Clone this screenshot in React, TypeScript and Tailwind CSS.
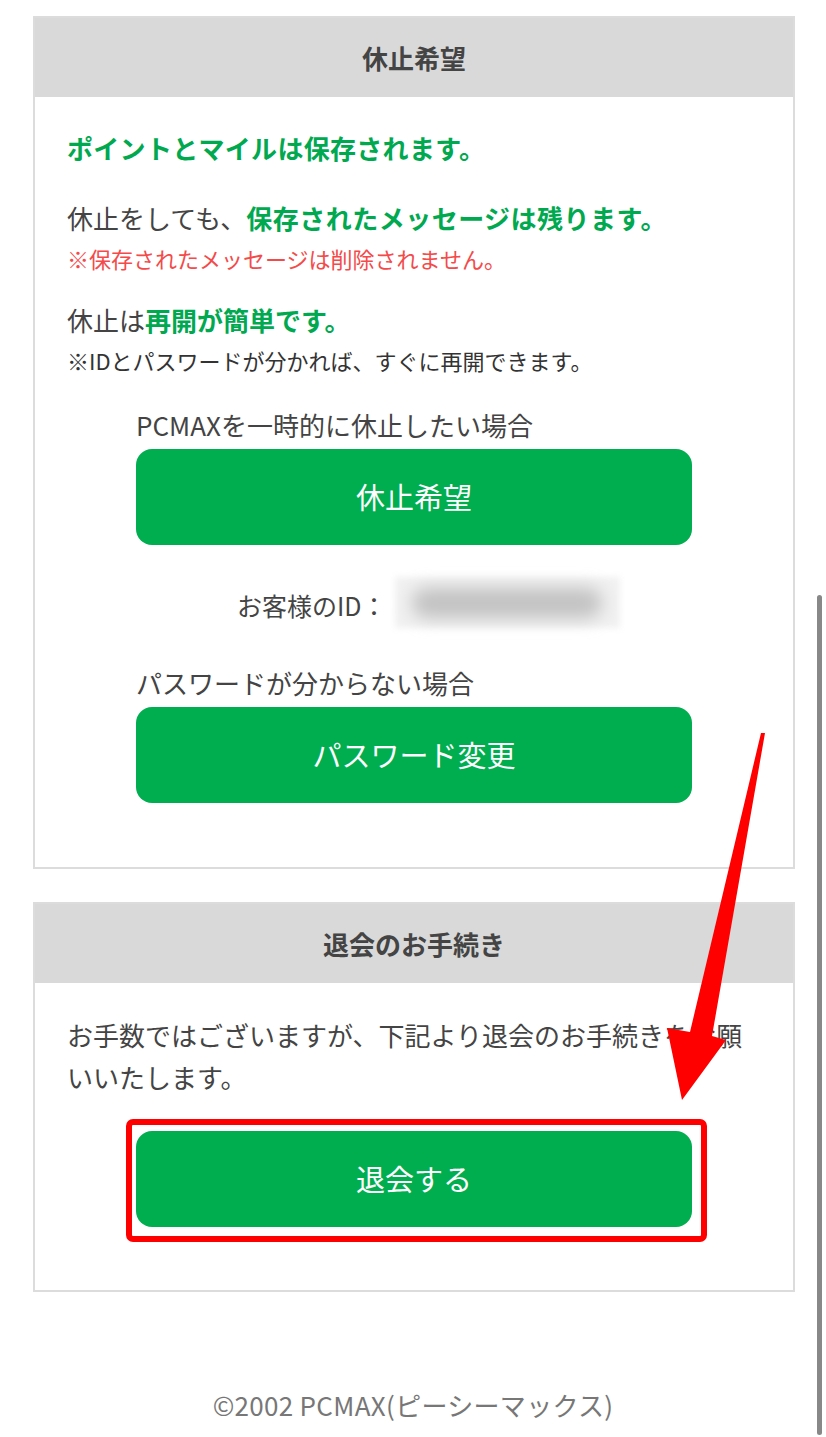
import type { ReactNode } from "react";

const font = {
  fontFamily: '"Noto Sans CJK JP", "Noto Sans", sans-serif',
};

function Panel({ title, children }: { title: string; children: ReactNode }) {
  return (
    <section className="ml-[33px] w-[762px] border-2 border-[#dcdcdc] bg-white">
      <h2 className="flex h-[79px] items-center justify-center bg-[#d9d9d9] text-[26px] font-bold text-[#444]">
        {title}
      </h2>
      {children}
    </section>
  );
}

function GreenButton({ label }: { label: string }) {
  return (
    <button
      type="button"
      className="flex h-[96px] w-[556px] items-center justify-center rounded-[16px] bg-[#00ae50] text-[29px] text-white"
    >
      {label}
    </button>
  );
}

export default function App() {
  return (
    <div
      className="relative h-[1437px] w-[826px] overflow-hidden bg-white pt-[16px] text-[#444]"
      style={font}
    >
      <Panel title="休止希望">
        <div className="px-[32px] pt-[31px] pb-[64px]">
          <p className="text-[26px] leading-[40px] font-bold tracking-[0.3px] text-[#00a94f]">
            ポイントとマイルは保存されます。
          </p>
          <p className="mt-[30px] text-[26px] leading-[40px]">
            休止をしても、
            <span className="font-bold tracking-[0.5px] text-[#00a94f]">
              保存されたメッセージは残ります。
            </span>
          </p>
          <p className="text-[22px] leading-[40px] text-[#f44a4a]">
            ※保存されたメッセージは削除されません。
          </p>
          <p className="mt-[22px] text-[26px] leading-[40px]">
            休止は
            <span className="font-bold text-[#00a94f]">再開が簡単です。</span>
          </p>
          <p className="pt-[2px] text-[22px] leading-[36px] text-[#333]">
            ※IDとパスワードが分かれば、すぐに再開できます。
          </p>

          <div className="mt-[27px] flex flex-col items-center">
            <div className="w-[556px]">
              <p className="text-[26px] leading-[40px]">
                PCMAXを一時的に休止したい場合
              </p>
              <div className="mt-[4px]">
                <GreenButton label="休止希望" />
              </div>
            </div>
          </div>

          <div className="mt-[32px] flex h-[51px] items-center pl-[170px]">
            <span className="pt-[6px] text-[25px]">お客様のID：</span>
            <div className="ml-[8px] flex h-[51px] w-[225px] items-center justify-center bg-[#f1f1f1] blur-[3px]">
              <div className="h-[30px] w-[190px] rounded-full bg-[#c2c2c2] blur-[8px]" />
            </div>
          </div>

          <div className="mt-[35px] flex flex-col items-center">
            <div className="w-[556px]">
              <p className="text-[26px] leading-[40px]">
                パスワードが分からない場合
              </p>
              <div className="mt-[4px]">
                <GreenButton label="パスワード変更" />
              </div>
            </div>
          </div>
        </div>
      </Panel>

      <div className="mt-[33px]">
        <Panel title="退会のお手続き">
          <div className="px-[32px] pt-[31px] pb-[63px]">
            <p className="text-[26px] leading-[42px]">
              お手数ではございますが、下記より退会のお手続きをお願いいたします。
            </p>
            <div className="mt-[33px] flex justify-center">
              <div className="relative">
                <GreenButton label="退会する" />
                <div className="pointer-events-none absolute top-[-12px] right-[-15px] bottom-[-15px] left-[-10px] rounded-[7px] border-[6px] border-[#ff0000]" />
              </div>
            </div>
          </div>
        </Panel>
      </div>

      <p className="mt-[93px] text-center text-[26px] leading-[40px] tracking-[0.3px] text-[#777]">
        ©2002 PCMAX(ピーシーマックス)
      </p>

      {/* pointer arrow down to the withdraw button */}
      <svg
        className="pointer-events-none absolute top-0 left-0"
        width="826"
        height="1437"
        viewBox="0 0 826 1437"
      >
        <polygon
          points="761,733 765,733 712,1036 726,1040 682,1100 667,1028 690,1032"
          fill="#ff0000"
        />
      </svg>

      {/* scrollbar thumb */}
      <div className="absolute top-[595px] right-[4px] h-[840px] w-[5px] rounded-full bg-[#888]" />
    </div>
  );
}
